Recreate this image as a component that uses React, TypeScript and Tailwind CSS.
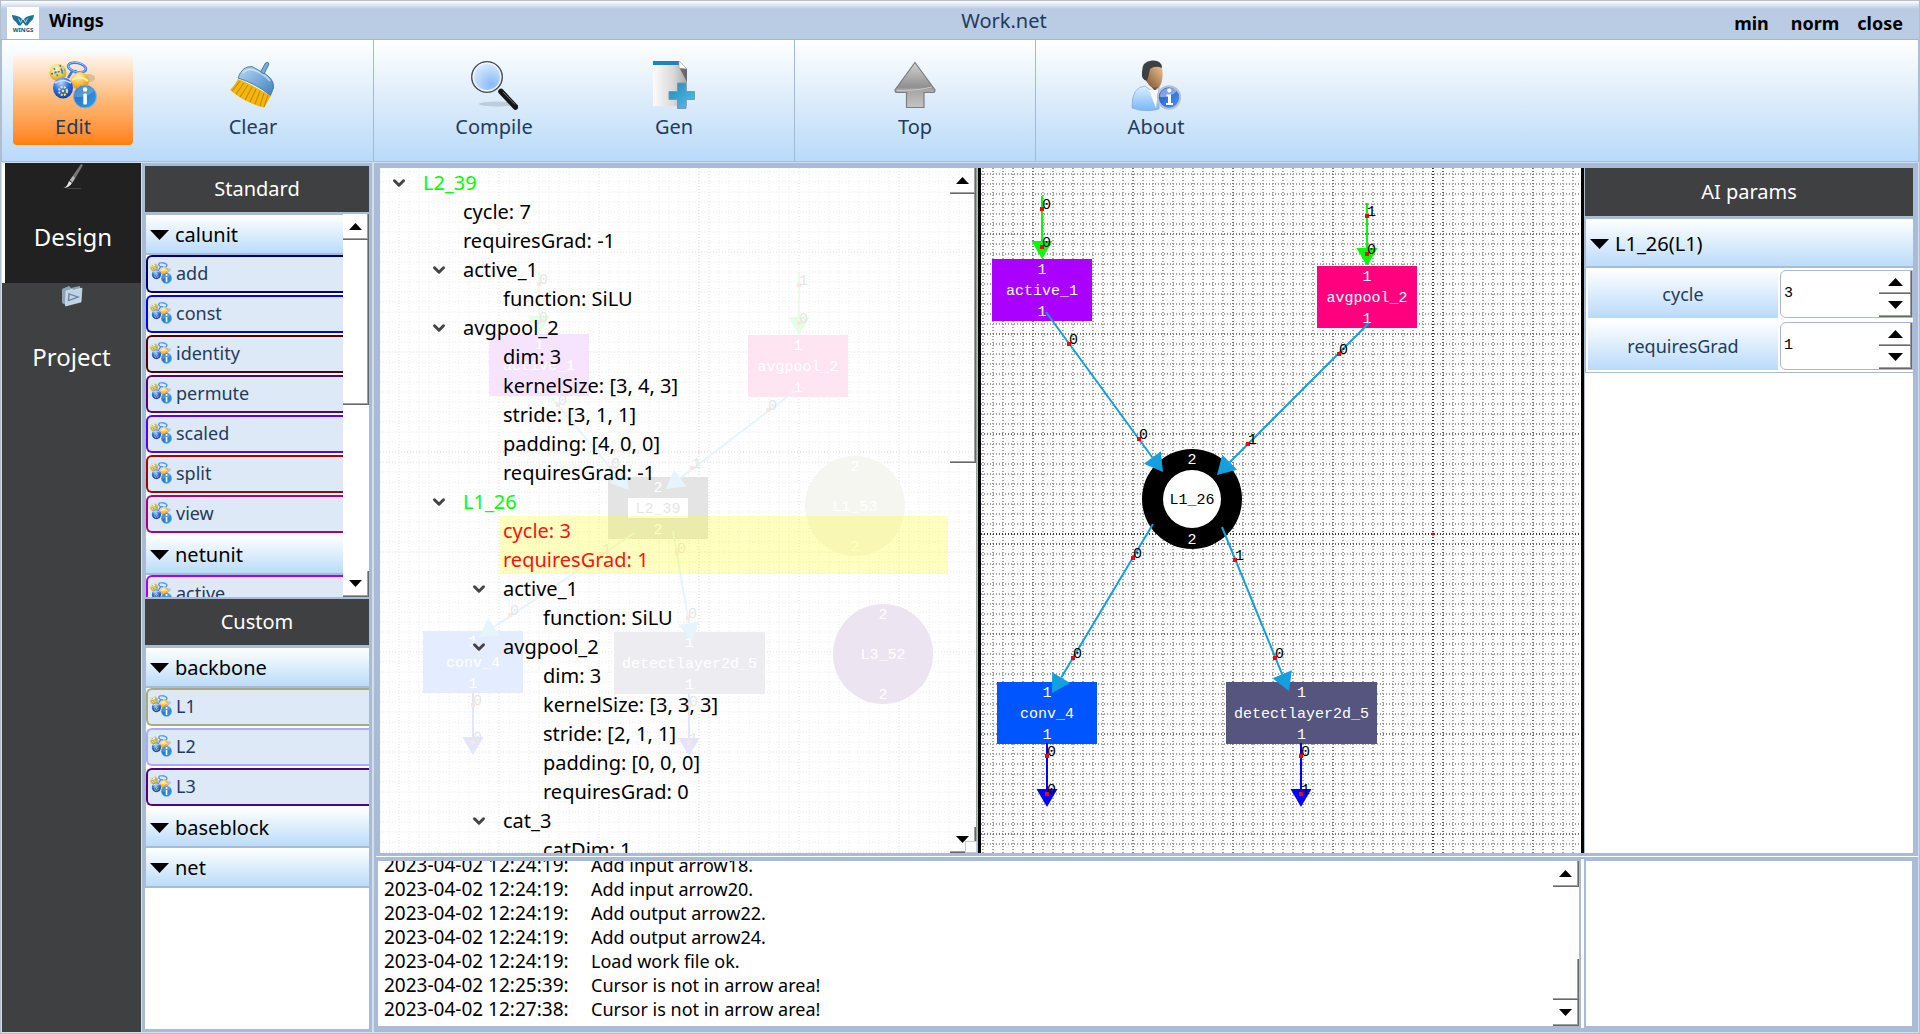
import { useId, type ReactNode } from "react";
import { ChevronDown } from "lucide-react";

const UI = "font-['Noto_Sans','Open_Sans',sans-serif]";

/* ---------- icons ---------- */

function BeadsIcon({ className }: { className: string }) {
  const id = useId();
  return (
    <svg viewBox="0 0 48 48" className={className} aria-hidden="true">
      <defs>
        <radialGradient id={id + "y"} cx=".4" cy=".3" r=".8">
          <stop offset="0" stopColor="#fffbd0" />
          <stop offset=".5" stopColor="#f0d24a" />
          <stop offset="1" stopColor="#b99212" />
        </radialGradient>
        <radialGradient id={id + "b"} cx=".4" cy=".25" r=".8">
          <stop offset="0" stopColor="#b8d8ff" />
          <stop offset=".5" stopColor="#2a6ee6" />
          <stop offset="1" stopColor="#0a3ca8" />
        </radialGradient>
        <radialGradient id={id + "o"} cx=".4" cy=".25" r=".8">
          <stop offset="0" stopColor="#fff2c4" />
          <stop offset=".5" stopColor="#ffbe3c" />
          <stop offset="1" stopColor="#e08a00" />
        </radialGradient>
        <linearGradient id={id + "i"} x1="0" y1="0" x2="1" y2="1">
          <stop offset="0" stopColor="#1a62bd" />
          <stop offset="1" stopColor="#2fa4e8" />
        </linearGradient>
      </defs>
      <ellipse cx="40" cy="17" rx="6" ry="4" fill="#9a8878" opacity=".35" />
      <path d="M24 9 L19 17 M26 9 L29 17" stroke="#2f7bea" strokeWidth="2.4" fill="none" />
      <ellipse cx="28" cy="6.5" rx="9" ry="4.6" transform="rotate(12 28 6.5)" fill="none" stroke="#2f7bf2" strokeWidth="2.6" />
      <ellipse cx="28" cy="6.2" rx="9" ry="4.6" transform="rotate(12 28 6.2)" fill="none" stroke="#a8ceff" strokeWidth=".8" />
      <ellipse cx="9" cy="11.500" rx="8.500" ry="8.500" fill={`url(#${id}y)`} />
      <path d="M2 13 L16 9 M5 7 L9 16 M11 4 L14 14" stroke="#3f78c8" strokeWidth="1.500" strokeDasharray="2 1.500" fill="none" />
      <ellipse cx="31" cy="20" rx="9" ry="9" fill={`url(#${id}o)`} />
      <path d="M23 19 Q31 13 39 20" stroke="#fff0bb" strokeWidth="1.800" fill="none" />
      <ellipse cx="14" cy="27" rx="10" ry="10.500" fill={`url(#${id}b)`} />
      <path d="M6 22 Q14 17 22 22" stroke="#cfe4ff" strokeWidth="1.600" fill="none" />
      <circle cx="14" cy="30" r="4" fill="none" stroke="#ffe65c" strokeWidth="2" strokeDasharray="2 1.200" />
      <circle cx="14" cy="30" r="1.300" fill="#ffe65c" />
      <circle cx="36" cy="35.500" r="11.500" fill={`url(#${id}i)`} stroke="#8db4dc" strokeWidth="1" />
      <path d="M25.500 36 A10.500 10.500 0 0 1 45 30 Q38 37 25.500 36Z" fill="#fff" opacity=".22" />
      <rect x="34.300" y="32.500" width="3.600" height="11" rx="1" fill="#fff" />
      <circle cx="36.100" cy="28.500" r="2.200" fill="#fff" />
    </svg>
  );
}

function BroomIcon() {
  return (
    <svg viewBox="0 0 48 48" className="h-12 w-12" aria-hidden="true">
      <defs>
        <linearGradient id="brm" x1="0" y1="0" x2="1" y2="1">
          <stop offset="0" stopColor="#bcd9f2" />
          <stop offset=".6" stopColor="#6fa5d6" />
          <stop offset="1" stopColor="#3f7cb8" />
        </linearGradient>
      </defs>
      <path d="M9 18 Q20 22 42 35 L35 46.500 Q16 42 1 29 Q6 24 9 18Z" fill="#f2b70d" />
      <path d="M11 20 L3 30 M15 22 L7 33 M19 24 L11 36 M23 26 L16 39 M27 28 L21 41 M31 30 L26 43 M35 32 L31 45 M39 34 L35 46" stroke="#c88a04" strokeWidth="1.100" />
      <path d="M9 17 Q13 5 23 5.500 L31 10 Q46 17 44.500 27 L41.500 34.500 Q26 22 9 17Z" fill="url(#brm)" stroke="#4378ab" strokeWidth=".9" />
      <path d="M14 12 Q17 8 23 8.500 Q35 12 41 20" stroke="#e2f1fd" strokeWidth="1.600" fill="none" opacity=".7" />
      <path d="M31.500 11 L36.500 2 Q39 0 40 3 L35 13Z" fill="#79add9" stroke="#3d6f9e" strokeWidth=".9" />
    </svg>
  );
}

function LensIcon() {
  return (
    <svg viewBox="0 0 48 50" className="h-[50px] w-12" aria-hidden="true">
      <defs>
        <radialGradient id="lens" cx=".65" cy=".75" r=".8">
          <stop offset="0" stopColor="#88b9fb" />
          <stop offset=".6" stopColor="#bddafc" />
          <stop offset="1" stopColor="#e0eefe" />
        </radialGradient>
      </defs>
      <ellipse cx="27" cy="44" rx="18" ry="2.500" fill="#5d6670" opacity=".22" />
      <path d="M29 30 L33 34" stroke="#9a9a9a" strokeWidth="3" />
      <path d="M31 31.500 L45.500 47" stroke="#161616" strokeWidth="5.500" strokeLinecap="round" />
      <path d="M33 32 L45 44.500" stroke="#777" strokeWidth="1" />
      <circle cx="17" cy="17" r="15.200" fill="url(#lens)" stroke="#4b4f55" strokeWidth="1.600" />
      <circle cx="17" cy="17" r="13.700" fill="none" stroke="#eef5fc" strokeWidth="1.400" />
    </svg>
  );
}

function GenIcon() {
  return (
    <svg viewBox="0 0 44 50" className="h-[50px] w-11" aria-hidden="true">
      <defs>
        <linearGradient id="gp" x1="0" y1="0" x2="1" y2="0">
          <stop offset="0" stopColor="#fbfbfb" />
          <stop offset=".6" stopColor="#d9d9d9" />
          <stop offset="1" stopColor="#a8a8a8" />
        </linearGradient>
        <linearGradient id="gx" x1="0" y1="0" x2="1" y2="1">
          <stop offset="0" stopColor="#2389bd" />
          <stop offset="1" stopColor="#56bfee" />
        </linearGradient>
      </defs>
      <path d="M1 1 H27 L35 9 V46 H1Z" fill="url(#gp)" />
      <path d="M1 1 H27 V5 H1Z" fill="#1f83c2" />
      <path d="M27 7 L35 9 V22 Z" fill="#444" opacity=".65" />
      <path d="M27 1 L35 9 L27 8Z" fill="#fff" stroke="#9c9c9c" strokeWidth=".6" />
      <path d="M25.500 23 H34 V31.500 H42.500 V39.500 H34 V48.500 H25.500 V39.500 H17 V31.500 H25.500Z" fill="url(#gx)" stroke="#7f96a4" strokeWidth="1" />
    </svg>
  );
}

function TopIcon() {
  return (
    <svg viewBox="0 0 42 48" className="h-12 w-[42px]" aria-hidden="true">
      <defs>
        <linearGradient id="up" x1="0" y1="0" x2="0" y2="1">
          <stop offset="0" stopColor="#d4d4d4" />
          <stop offset=".55" stopColor="#8f8f8f" />
          <stop offset=".6" stopColor="#a5a5a5" />
          <stop offset="1" stopColor="#c4c4c4" />
        </linearGradient>
      </defs>
      <path d="M21 1.500 L41 29 Q41 31.500 39 31.500 H30 V46.500 H12.500 V31.500 H3 Q1 31.500 1 29Z" fill="url(#up)" stroke="#7c7c7c" strokeWidth="1.200" />
      <path d="M3 29.500 Q22 30 38 26" stroke="#c9c9c9" strokeWidth="1" fill="none" />
    </svg>
  );
}

function AboutIcon() {
  return (
    <svg viewBox="0 0 50 51" className="h-[51px] w-[50px]" aria-hidden="true">
      <defs>
        <linearGradient id="abf" x1="1" y1="0" x2="0" y2="1">
          <stop offset="0" stopColor="#efc79c" />
          <stop offset="1" stopColor="#7a4c22" />
        </linearGradient>
        <linearGradient id="abs" x1="0" y1="0" x2="0" y2="1">
          <stop offset="0" stopColor="#dcefff" />
          <stop offset="1" stopColor="#79b6f7" />
        </linearGradient>
        <linearGradient id="abi" x1="0" y1="0" x2="1" y2="1">
          <stop offset="0" stopColor="#1c50c4" />
          <stop offset="1" stopColor="#4b9bf5" />
        </linearGradient>
      </defs>
      <path d="M15 21 L25 32 L29 25Z" fill="#7a4c22" />
      <path d="M1 46 Q1 27 14 26 L22 32 L28 27 V49 Q14 53 1 48Z" fill="url(#abs)" stroke="#7fa9d2" strokeWidth=".7" />
      <path d="M18 30 L25 48 L27 30Z" fill="#fff" />
      <path d="M13 9 Q20 1 31 8 Q33 19 29 26 Q22 30 18 25 Q14 19 13 9Z" fill="url(#abf)" />
      <path d="M11 12 Q11 1 21 .5 Q31 0 31 8 Q24 5 19 9 Q18 15 16 21 Q10 20 11 12Z" fill="#3d4043" />
      <circle cx="38" cy="37.500" r="11.200" fill="url(#abi)" stroke="#b9c2cf" strokeWidth="2" />
      <path d="M28.500 37 A10 10 0 0 1 46 31 Q39 38 28.500 37Z" fill="#fff" opacity=".4" />
      <path d="M35.500 34.500 H40 V43 H42 V45 H35 V43 H37 V36.500 H35.500Z" fill="#fff" />
      <circle cx="38.300" cy="30.500" r="2" fill="#fff" />
    </svg>
  );
}

function WingsLogo() {
  return (
    <svg viewBox="0 0 32 32" className="h-8 w-8 bg-white" role="img" aria-label="Wings logo">
      <path d="M5 8 Q12 9 14 11 L16 13 L18 11 Q20 9 27 8 Q26.500 13 23.500 14.500 L20.500 18.500 H18.500 L16 15.500 L13.500 18.500 H11.500 L8.500 14.500 Q5.500 13 5 8Z" fill="#1d7295" />
      <path d="M11.500 11.500 L13.500 15.500 L16 11 L18.500 15.500 L20.500 11.500" stroke="#dff0f6" strokeWidth=".8" fill="none" />
      <text x="16" y="25" textAnchor="middle" fontSize="6" fontWeight="700" fontFamily="Noto Sans" fill="#1b4f66">WINGS</text>
    </svg>
  );
}

function BrushIcon() {
  return (
    <svg viewBox="0 0 24 26" className="h-[26px] w-6" aria-hidden="true">
      <path d="M2 25 Q6 24.500 8 18 L11 20 Q8 25 2 25Z" fill="#e8e8e8" />
      <path d="M8.500 17.500 L20 1 L22 2 L11.500 20Z" fill="#777" />
      <path d="M9 17 L12 13 L14 15 L11.500 19Z" fill="#b5b5b5" />
      <path d="M6 25.500 H20" stroke="#444" />
    </svg>
  );
}

function FolderIcon() {
  return (
    <svg viewBox="0 0 22 22" className="h-[22px] w-[22px]" aria-hidden="true">
      <path d="M1 4 L8 1 L10 3 L19 1 V16 L5 20 L1 18Z" fill="#8ba4ba" />
      <path d="M5 6 L11 4.500 L12.500 5.500 L21 3 L20 17 L4.500 21Z" fill="#bed3e6" stroke="#e5eef6" strokeWidth=".6" />
      <path d="M8 9 L17 12 L7.500 15.500Z" fill="none" stroke="#64819d" strokeWidth="1.300" />
    </svg>
  );
}

function Caret({ up = false, className = "h-[7px] w-[13px]" }: { up?: boolean; className?: string }) {
  return (
    <svg viewBox="0 0 14 8" preserveAspectRatio="none" className={className} aria-hidden="true">
      <path d={up ? "M0 8 L7 0 L14 8Z" : "M0 0 H14 L7 8Z"} fill="#000" />
    </svg>
  );
}

/* ---------- shared controls ---------- */

const BEVEL = "border-r border-b border-[#696969] shadow-[inset_-1px_-1px_0_#a0a0a0]";

function ScrollBar({ before, thumb, after, clear = false }: { before: number; thumb: number; after: number; clear?: boolean }) {
  return (
    <div className={`flex w-[26px] shrink-0 flex-col ${clear ? "" : "bg-white"}`}>
      <button aria-label="Scroll up" className={`flex h-[26px] shrink-0 items-center justify-center ${BEVEL}`}>
        <Caret up />
      </button>
      <div className="flex min-h-0 flex-1 flex-col">
        <div style={{ flex: `${before} 0 0px` }} />
        <div style={{ flex: `${thumb} 0 0px` }} className={BEVEL} />
        <div style={{ flex: `${after} 0 0px` }} />
      </div>
      <button aria-label="Scroll down" className={`flex h-[26px] shrink-0 items-center justify-center ${BEVEL}`}>
        <Caret />
      </button>
    </div>
  );
}

function PanelTitle({ children }: { children: ReactNode }) {
  return (
    <h2 className="flex h-[46px] shrink-0 items-center justify-center bg-[#3f4041] text-xl text-white">{children}</h2>
  );
}

function GroupHeader({ children, tall = false }: { children: ReactNode; tall?: boolean }) {
  return (
    <button
      className={`flex w-full shrink-0 items-center gap-1.5 border-b-2 border-[#aabbd5] bg-linear-to-b from-white to-[#bbdcf9] pt-0.5 pl-1 text-left text-xl text-black ${tall ? "h-[49px]" : "h-10"}`}
    >
      <Caret className="h-[10px] w-[19px]" />
      {children}
    </button>
  );
}

function UnitItem({ label, color }: { label: string; color: string }) {
  return (
    <button
      className="mb-0.5 flex h-[38px] w-full shrink-0 items-center gap-1 rounded-l-md border-y-2 border-l-2 bg-[#dde9f7] pb-0.5 pl-0.5 text-left text-lg text-[#1f3b5e]"
      style={{ borderColor: color }}
    >
      <BeadsIcon className="h-[22px] w-[22px]" />
      {label}
    </button>
  );
}

/* ---------- diagram ---------- */

type Node = { x: number; y: number; w?: number; color: string; name: string; io: string; kind?: "box" | "ring" | "frame" | "disc" };
type Edge = { from: [number, number]; to: [number, number]; color: string; dots: [number, number, string][] };
type Graph = { axis: [number, number]; nodes: Node[]; edges: Edge[] };

const SKY = "#149fdf";
const LIME = "#00ff00";
const BLUE = "#0000ff";

const detailGraph: Graph = {
  axis: [452, 366],
  nodes: [
    { x: 11, y: 91, color: "#aa00ff", name: "active_1", io: "1" },
    { x: 336, y: 98, color: "#ff007f", name: "avgpool_2", io: "1" },
    { x: 161, y: 281, color: "#000000", name: "L1_26", io: "2", kind: "ring" },
    { x: 16, y: 514, color: "#0055ff", name: "conv_4", io: "1" },
    { x: 245, y: 514, w: 151, color: "#55557f", name: "detectlayer2d_5", io: "1" },
  ],
  edges: [
    { from: [61, 28], to: [61, 91], color: LIME, dots: [[61, 41, "0"], [61, 79, "0"]] },
    { from: [386, 35], to: [386, 98], color: LIME, dots: [[386, 48, "1"], [386, 86, "0"]] },
    { from: [65, 144], to: [182, 304], color: SKY, dots: [[88, 176, "0"], [158, 271, "0"]] },
    { from: [388, 155], to: [236, 307], color: SKY, dots: [[358, 186, "0"], [267, 276, "1"]] },
    { from: [172, 356], to: [71, 525], color: SKY, dots: [[152, 390, "0"], [92, 490, "0"]] },
    { from: [241, 359], to: [308, 523], color: SKY, dots: [[254, 392, "1"], [294, 490, "0"]] },
    { from: [66, 575], to: [66, 639], color: BLUE, dots: [[66, 588, "0"], [66, 626, "0"]] },
    { from: [320, 575], to: [320, 639], color: BLUE, dots: [[320, 588, "0"], [320, 626, "1"]] },
  ],
};

const overviewGraph: Graph = {
  axis: [319, 284],
  nodes: [
    { x: 109, y: 166, color: "#aa00ff", name: "active_1", io: "1" },
    { x: 368, y: 167, color: "#ff007f", name: "avgpool_2", io: "1" },
    { x: 228, y: 309, color: "#000000", name: "L2_39", io: "2", kind: "frame" },
    { x: 425, y: 288, color: "#aaaa7f", name: "L1_53", io: "2", kind: "disc" },
    { x: 453, y: 436, color: "#55007f", name: "L3_52", io: "2", kind: "disc" },
    { x: 43, y: 463, color: "#0055ff", name: "conv_4", io: "1" },
    { x: 234, y: 464, w: 151, color: "#55557f", name: "detectlayer2d_5", io: "1" },
  ],
  edges: [
    { from: [159, 104], to: [159, 166], color: LIME, dots: [[159, 116, "0"], [159, 154, "0"]] },
    { from: [419, 104], to: [419, 167], color: LIME, dots: [[419, 117, "1"], [419, 155, "0"]] },
    { from: [171, 229], to: [249, 322], color: SKY, dots: [[178, 237, "0"], [231, 300, "0"]] },
    { from: [415, 223], to: [286, 321], color: SKY, dots: [[388, 242, "0"], [312, 300, "1"]] },
    { from: [254, 365], to: [99, 469], color: SKY, dots: [[222, 386, "1"], [130, 447, "0"]] },
    { from: [293, 363], to: [312, 473], color: SKY, dots: [[297, 385, "0"], [308, 450, "0"]] },
    { from: [93, 525], to: [93, 587], color: BLUE, dots: [[93, 537, "0"], [93, 574, "0"]] },
    { from: [309, 526], to: [309, 588], color: BLUE, dots: [[309, 538, "0"], [309, 575, "1"]] },
  ],
};

function GraphNode({ x, y, w = 100, color, name, io, kind = "box" }: Node) {
  const round = kind === "ring" || kind === "disc";
  const h = round ? 100 : 62;
  const cx = x + w / 2;
  const cy = y + h / 2;
  const gap = round ? 40 : 21;
  const light = kind === "ring" || kind === "frame";
  return (
    <g textAnchor="middle" fill="#fff">
      {round ? (
        <circle cx={cx} cy={cy} r={50} fill={color} />
      ) : (
        <rect x={x} y={y} width={w} height={h} fill={color} />
      )}
      {kind === "ring" && <circle cx={cx} cy={cy} r={29} />}
      {kind === "frame" && <rect x={cx - 30} y={cy - 10} width={60} height={20} />}
      <text x={cx} y={cy - gap + 5}>{io}</text>
      <text x={cx} y={cy + 5} fill={light ? "#000" : "#fff"}>{name}</text>
      <text x={cx} y={cy + gap + 5}>{io}</text>
    </g>
  );
}

function GraphEdge({ from, to, color, dots }: Edge) {
  const dx = to[0] - from[0];
  const dy = to[1] - from[1];
  const len = Math.hypot(dx, dy);
  const ux = dx / len;
  const uy = dy / len;
  const bx = to[0] - ux * 18;
  const by = to[1] - uy * 18;
  return (
    <g>
      <path d={`M${from[0]} ${from[1]} L${bx} ${by}`} stroke={color} strokeWidth={2} />
      <path d={`M${to[0]} ${to[1]} L${bx - uy * 10.5} ${by + ux * 10.5} L${bx + uy * 10.5} ${by - ux * 10.5}Z`} fill={color} />
      {dots.map(([x, y, t], i) => (
        <g key={i}>
          <rect x={x - 2} y={y - 2} width={4} height={4} fill="#ff0000" />
          <text x={x} y={y}>{t}</text>
        </g>
      ))}
    </g>
  );
}

const PITCH = 10;
const LINES = Array.from({ length: 240 }, (_, i) => i);

function lineColor(pos: number, axis: number) {
  if (pos === axis) return "#3c3c3c";
  if (pos === axis + PITCH) return "#6a6a6a";
  return (pos - axis) % 100 === 0 ? "#7a7a7a" : "#a2a2a2";
}

function Grid({ axis: [ax, ay] }: { axis: [number, number] }) {
  return (
    <g strokeWidth="2" strokeDasharray="1 2">
      {LINES.map((i) => {
        const x = (ax % PITCH) + i * PITCH;
        const y = (ay % PITCH) + i * PITCH;
        return (
          <g key={i}>
            <line x1={x} x2={x} y1="0" y2="100%" stroke={lineColor(x, ax)} />
            <line x1="0" x2="100%" y1={y} y2={y} stroke={lineColor(y, ay)} />
          </g>
        );
      })}
    </g>
  );
}

function Diagram({ graph, label }: { graph: Graph; label: string }) {
  const [ax, ay] = graph.axis;
  return (
    <svg className="block h-full w-full bg-white font-['Liberation_Mono',monospace] text-[15px]" role="img" aria-label={label}>
      <Grid axis={graph.axis} />
      <circle cx={ax} cy={ay} r={1.5} fill="#ff0000" />
      {graph.nodes.map((n) => (
        <GraphNode key={n.name} {...n} />
      ))}
      {graph.edges.map((e, i) => (
        <GraphEdge key={i} {...e} />
      ))}
    </svg>
  );
}

/* ---------- data ---------- */

const ribbon: { label: string; icon: ReactNode; active?: boolean }[][] = [
  [
    { label: "Edit", icon: <BeadsIcon className="h-12 w-12" />, active: true },
    { label: "Clear", icon: <BroomIcon /> },
  ],
  [
    { label: "Compile", icon: <LensIcon /> },
    { label: "Gen", icon: <GenIcon /> },
  ],
  [{ label: "Top", icon: <TopIcon /> }],
  [{ label: "About", icon: <AboutIcon /> }],
];

const calunits: [string, string][] = [
  ["add", "#00007f"],
  ["const", "#0000ff"],
  ["identity", "#550000"],
  ["permute", "#55007f"],
  ["scaled", "#5500ff"],
  ["split", "#aa0000"],
  ["view", "#aa007f"],
];

const backbones: [string, string][] = [
  ["L1", "#aaaa7f"],
  ["L2", "#aaaaff"],
  ["L3", "#55007f"],
];

type Row = { text: string; depth: 0 | 1 | 2 | 3; open?: boolean; tone?: "block" | "hot" };

const treeRows: Row[] = [
  { text: "L2_39", depth: 0, open: true, tone: "block" },
  { text: "cycle: 7", depth: 1 },
  { text: "requiresGrad: -1", depth: 1 },
  { text: "active_1", depth: 1, open: true },
  { text: "function: SiLU", depth: 2 },
  { text: "avgpool_2", depth: 1, open: true },
  { text: "dim: 3", depth: 2 },
  { text: "kernelSize: [3, 4, 3]", depth: 2 },
  { text: "stride: [3, 1, 1]", depth: 2 },
  { text: "padding: [4, 0, 0]", depth: 2 },
  { text: "requiresGrad: -1", depth: 2 },
  { text: "L1_26", depth: 1, open: true, tone: "block" },
  { text: "cycle: 3", depth: 2, tone: "hot" },
  { text: "requiresGrad: 1", depth: 2, tone: "hot" },
  { text: "active_1", depth: 2, open: true },
  { text: "function: SiLU", depth: 3 },
  { text: "avgpool_2", depth: 2, open: true },
  { text: "dim: 3", depth: 3 },
  { text: "kernelSize: [3, 3, 3]", depth: 3 },
  { text: "stride: [2, 1, 1]", depth: 3 },
  { text: "padding: [0, 0, 0]", depth: 3 },
  { text: "requiresGrad: 0", depth: 3 },
  { text: "cat_3", depth: 2, open: true },
  { text: "catDim: 1", depth: 3 },
];

const indent = ["ml-2.5", "ml-[50px]", "ml-[90px]", "ml-[130px]"];

const logs: [string, string][] = [
  ["2023-04-02 12:24:19:", "Add input arrow18."],
  ["2023-04-02 12:24:19:", "Add input arrow20."],
  ["2023-04-02 12:24:19:", "Add output arrow22."],
  ["2023-04-02 12:24:19:", "Add output arrow24."],
  ["2023-04-02 12:24:19:", "Load work file ok."],
  ["2023-04-02 12:25:39:", "Cursor is not in arrow area!"],
  ["2023-04-02 12:27:38:", "Cursor is not in arrow area!"],
];

/* ---------- sections ---------- */

function TitleBar() {
  return (
    <header className="grid h-[39px] shrink-0 grid-cols-[1fr_auto_1fr] border-b border-[#a3b7d3] bg-linear-to-b from-white to-[#bacbe4] to-[8px] text-lg">
      <div className="flex items-end gap-2.5 pl-1.5">
        <WingsLogo />
        <h1 className="self-center font-bold text-black">Wings</h1>
      </div>
      <p className="self-center pt-0.5 pl-[88px] text-xl text-[#1f3b5e]">Work.net</p>
      <div className="flex items-center justify-end gap-[22px] pt-1.5 pr-4 font-bold text-black">
        <button>min</button>
        <button>norm</button>
        <button className="-ml-1">close</button>
      </div>
    </header>
  );
}

function Ribbon() {
  return (
    <nav aria-label="Tools" className="flex h-[122px] shrink-0 border border-t-0 border-[#a9bcd8] bg-linear-to-b from-white via-[#dcecfa] to-[#b9dafa]">
      {ribbon.map((group, g) => (
        <div key={g} className={`flex gap-[60px] pt-[15px] pr-[60px] ${g === 0 ? "pl-[11px]" : "pl-[60px]"} ${g < 3 ? "border-r border-[#a3b9d8]" : ""}`}>
          {group.map((b) => (
            <button
              key={b.label}
              className={`flex h-[90px] w-[120px] flex-col items-center rounded text-xl text-[#1f3b5e] ${b.active ? "bg-linear-to-b from-[#fff6ee] via-[#fdb976] to-[#ff8000]" : ""}`}
            >
              <span className="flex h-14 items-center justify-center pt-1">{b.icon}</span>
              <span className="leading-8">{b.label}</span>
            </button>
          ))}
        </div>
      ))}
    </nav>
  );
}

function SideNav() {
  return (
    <nav aria-label="Mode" className="w-[139px] shrink-0 bg-[#3f4041] text-2xl text-white">
      <button className="flex h-[120px] w-full flex-col items-center border-l-3 border-white bg-[#212121]">
        <BrushIcon />
        <span className="mt-8">Design</span>
      </button>
      <button className="flex h-[120px] w-full flex-col items-center pt-0.5">
        <FolderIcon />
        <span className="mt-[34px]">Project</span>
      </button>
    </nav>
  );
}

function UnitPanel() {
  return (
    <aside className="flex w-[233px] shrink-0 flex-col border-r-2 border-l border-r-[#d3deec] border-l-[#d3deec] p-[3px] text-black">
      <PanelTitle>Standard</PanelTitle>
      <section className="mt-0.5 mb-0.5 flex h-[383px] shrink-0 bg-white">
        <div className="min-w-0 flex-1 overflow-hidden border-t border-l border-[#aabbd5]">
          <GroupHeader>calunit</GroupHeader>
          {calunits.map(([label, color]) => (
            <UnitItem key={label} label={label} color={color} />
          ))}
          <GroupHeader>netunit</GroupHeader>
          <UnitItem label="active" color="#aa00ff" />
        </div>
        <ScrollBar before={0} thumb={165} after={167} />
      </section>
      <PanelTitle>Custom</PanelTitle>
      <section className="mt-0.5 min-h-0 flex-1 overflow-hidden border-t border-[#aabbd5] bg-white">
        <div className="border-l border-[#aabbd5]">
          <GroupHeader>backbone</GroupHeader>
          {backbones.map(([label, color]) => (
            <UnitItem key={label} label={label} color={color} />
          ))}
          <GroupHeader>baseblock</GroupHeader>
          <GroupHeader>net</GroupHeader>
        </div>
      </section>
    </aside>
  );
}

function TreePane() {
  return (
    <section className="relative min-w-0 flex-[597] overflow-hidden bg-white">
      <div className="absolute inset-0 opacity-10">
        <Diagram graph={overviewGraph} label="Network overview" />
      </div>
      <div className="relative flex h-full border-r border-[#a0a0a0]">
        <ul className="min-w-0 flex-1 overflow-hidden text-xl leading-[29px] text-black">
          {treeRows.map((r, i) => (
            <li
              key={i}
              className={`mr-0.5 flex h-[29px] items-center ${indent[r.depth]} ${r.tone === "block" ? "text-[#00ff00]" : ""} ${r.tone === "hot" ? "text-[#ff1010]" : ""}`}
            >
              <span className="flex w-[30px] shrink-0 items-center">
                {r.open && <ChevronDown className="h-[18px] w-[18px] text-[#444]" strokeWidth={4} />}
              </span>
              <span className={`min-w-0 flex-1 whitespace-nowrap pl-[3px] ${r.tone === "hot" ? "bg-[#ffff00]/25" : ""}`}>{r.text}</span>
            </li>
          ))}
        </ul>
        <ScrollBar before={0} thumb={268} after={365} clear />
      </div>
      <div className="absolute right-0 bottom-0 h-3 w-3 border border-[#c5c9d2] bg-white" />
    </section>
  );
}

function SpinRow({ label, value }: { label: string; value: string }) {
  const id = useId();
  return (
    <div className="flex h-[52px] items-start gap-0.5 pt-px pl-0.5">
      <label htmlFor={id} className="flex h-[49px] w-[190px] items-center justify-center bg-linear-to-b from-white to-[#b9dafa] text-lg text-[#1f3b5e]">
        {label}
      </label>
      <div className="mt-px flex h-12 min-w-0 flex-1 overflow-hidden rounded-l-md border border-[#a9bad8] bg-white">
        <input id={id} defaultValue={value} className="min-w-0 flex-1 pl-[3px] font-['Liberation_Mono',monospace] text-[15px] text-black outline-none" />
        <div className="flex w-[33px] flex-col">
          <button aria-label={`Increase ${label}`} className={`flex flex-1 items-center justify-center ${BEVEL}`}>
            <Caret up className="h-2 w-[15px]" />
          </button>
          <button aria-label={`Decrease ${label}`} className={`flex flex-1 items-center justify-center ${BEVEL}`}>
            <Caret className="h-2 w-[15px]" />
          </button>
        </div>
      </div>
    </div>
  );
}

function ParamPane() {
  return (
    <aside className="flex w-[328px] shrink-0 flex-col bg-white">
      <h2 className="flex h-12 shrink-0 items-center justify-center bg-[#3f4041] text-xl text-white">AI params</h2>
      <div className="border-t-3 border-b border-l border-[#aabbd5]">
        <GroupHeader tall>L1_26(L1)</GroupHeader>
        <SpinRow label="cycle" value="3" />
        <SpinRow label="requiresGrad" value="1" />
      </div>
    </aside>
  );
}

function LogPane() {
  return (
    <section className="flex min-w-0 flex-1 bg-white">
      <ol className="flex min-w-0 flex-1 flex-col justify-end overflow-hidden pb-[5px] pl-1.5 text-lg leading-6 text-black">
        {logs.map(([time, text], i) => (
          <li key={i} className="flex h-6 shrink-0 items-baseline">
            <time className="w-[207px] shrink-0 text-[19px] leading-6">{time}</time>
            <span>{text}</span>
          </li>
        ))}
      </ol>
      <ScrollBar before={73} thumb={40} after={0} />
    </section>
  );
}

export default function App() {
  return (
    <div className={`flex h-screen flex-col overflow-hidden border border-[#b4bfce] bg-[#aabbd5] ${UI}`}>
      <TitleBar />
      <Ribbon />
      <div className="flex min-h-0 flex-1 border border-[#d3deec]">
        <SideNav />
        <UnitPanel />
        <main className="flex min-w-0 flex-1 flex-col pt-[5px] pb-1.5">
          <div className="flex min-h-0 flex-1 pr-[5px] pl-1.5">
            <TreePane />
            <div className="ml-px w-[3px] bg-black" />
            <section className="min-w-0 flex-[600] overflow-hidden">
              <Diagram graph={detailGraph} label="Block diagram" />
            </section>
            <div className="mr-px w-[3px] bg-black" />
            <ParamPane />
          </div>
          <div className="flex h-2 shrink-0 flex-col pt-[3px] pl-0.5">
            <div className="h-px bg-white" />
          </div>
          <div className="flex h-[165px] shrink-0 gap-0.5 pr-1.5 pl-1">
            <LogPane />
            <div className="-my-0.5 w-[3px] bg-white" />
            <section aria-label="Preview" className="w-[326px] shrink-0 bg-white" />
          </div>
        </main>
      </div>
    </div>
  );
}
